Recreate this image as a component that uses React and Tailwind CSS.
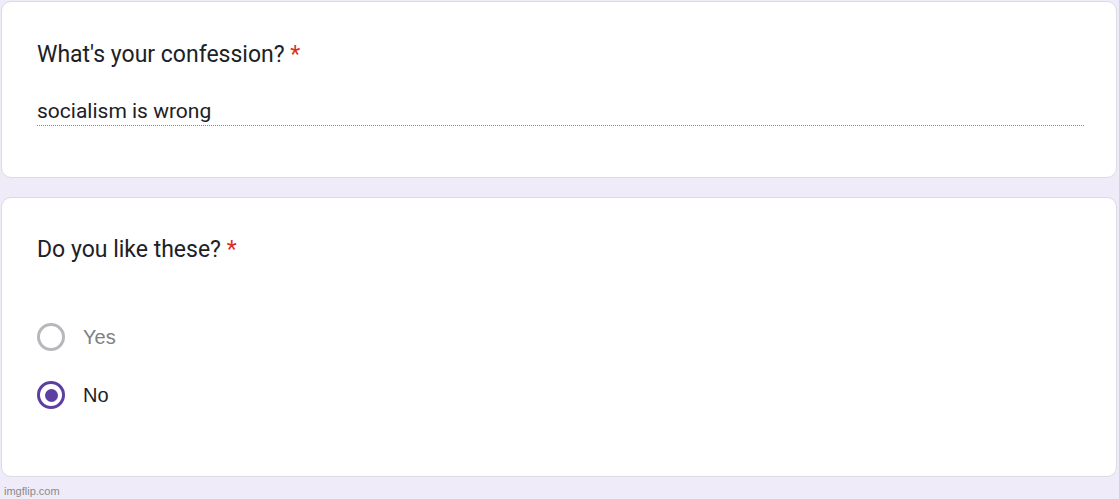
import React from 'react';

function Radio({ checked }) {
  return checked ? (
    <div className="w-[28px] h-[28px] rounded-full border-[3px] border-[#5e3ea1] flex items-center justify-center">
      <div className="w-[13px] h-[13px] rounded-full bg-[#5e3ea1]" />
    </div>
  ) : (
    <div className="w-[28px] h-[28px] rounded-full border-[3px] border-[#b6b8bc]" />
  );
}

export default function App() {
  return (
    <div
      className="w-[1119px] h-[499px] bg-[#f0ebf8] pt-px px-px flex flex-col"
      style={{ fontFamily: 'Roboto, "Liberation Sans", sans-serif' }}
    >
      {/* Question: text answer */}
      <div className="w-[1116px] h-[177px] bg-white rounded-[10px] border border-[#dadce0] px-[35px] pt-[38px]">
        <div className="text-[23px] leading-[30px] text-[#202124]">
          What's your confession? <span className="text-[#d93025]">*</span>
        </div>
        <div className="mt-[28px] w-[1047px] border-b border-dotted border-[#8a8a8a] pb-px text-[21px] leading-[26px] text-[#202124]">
          socialism is wrong
        </div>
      </div>

      {/* Question: multiple choice */}
      <div className="mt-[19px] w-[1116px] h-[280px] bg-white rounded-[10px] border border-[#dadce0] px-[35px] pt-[37px]">
        <div className="text-[23px] leading-[30px] text-[#202124]">
          Do you like these? <span className="text-[#d93025]">*</span>
        </div>
        <div
          className="mt-[58px] flex flex-col gap-[30px]"
          style={{ fontFamily: '"Liberation Sans", Arial, sans-serif' }}
        >
          <div className="flex items-center gap-[18px]">
            <Radio />
            <span className="text-[20px] leading-[28px] text-[#7d8085]">Yes</span>
          </div>
          <div className="flex items-center gap-[18px]">
            <Radio checked />
            <span className="text-[20px] leading-[28px] text-[#202124]">No</span>
          </div>
        </div>
      </div>

      <div
        className="mt-[8px] ml-[3px] text-[11px] leading-[12px] text-[#8a8a8a]"
        style={{ fontFamily: '"Liberation Sans", Arial, sans-serif' }}
      >
        imgflip.com
      </div>
    </div>
  );
}
